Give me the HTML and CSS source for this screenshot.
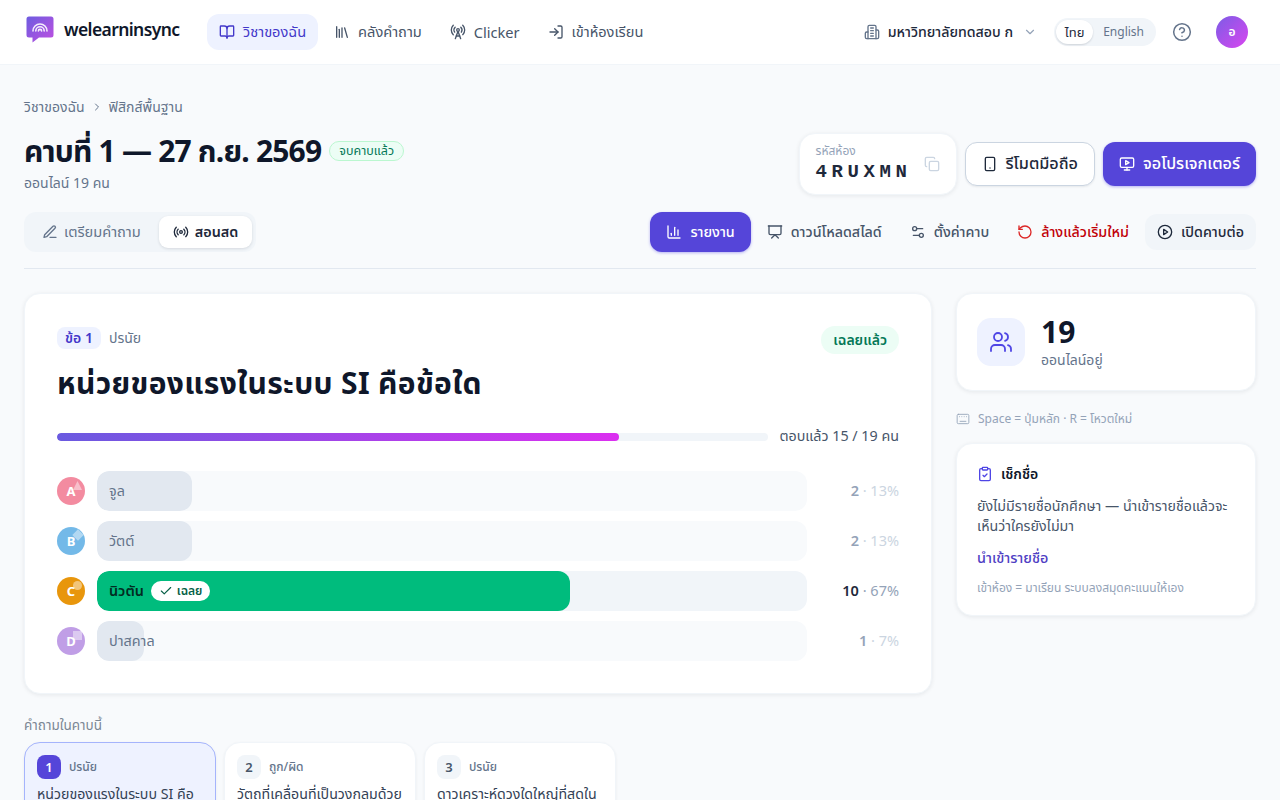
FILE: index.html
```html
<!DOCTYPE html>
<html lang="th">
<head>
  <meta charset="UTF-8" />
  <meta name="viewport" content="width=device-width, initial-scale=1.0" />
  <title>welearninsync</title>
  <link rel="stylesheet" href="styles.css">
</head>
<body>
  <!-- Top navigation -->
  <header class="topbar">
    <a class="brand">
      <svg class="brand-logo" width="30" height="30" viewBox="0 0 30 30">
        <defs><linearGradient id="logoGrad" x1="0" y1="0" x2="1" y2="1"><stop offset="0" stop-color="#6d5ce0"/><stop offset="1" stop-color="#c04fe0"/></linearGradient></defs>
        <path d="M4 1.500h22a2.500 2.500 0 0 1 2.500 2.500v16a2.500 2.500 0 0 1-2.500 2.500H14l-6.500 5v-5H4A2.500 2.500 0 0 1 1.500 20V4A2.500 2.500 0 0 1 4 1.500z" fill="url(#logoGrad)"/>
        <g fill="none" stroke="#fff" stroke-width="1.600" stroke-linecap="round" opacity=".9">
          <path d="M8 16a7 7 0 0 1 14 0"/><path d="M10.800 16a4.200 4.200 0 0 1 8.400 0"/><path d="M13.400 16a1.600 1.600 0 0 1 3.200 0"/>
        </g>
      </svg>
      <span>welearninsync</span>
    </a>
    <nav class="nav">
      <a class="nav-item active">
        <svg class="icon" viewBox="0 0 24 24"><path d="M12 7v14"/><path d="M3 18a1 1 0 0 1-1-1V4a1 1 0 0 1 1-1h5a4 4 0 0 1 4 4 4 4 0 0 1 4-4h5a1 1 0 0 1 1 1v13a1 1 0 0 1-1 1h-6a3 3 0 0 0-3 3 3 3 0 0 0-3-3z"/></svg>
        วิชาของฉัน
      </a>
      <a class="nav-item">
        <svg class="icon" viewBox="0 0 24 24"><path d="m16 6 4 14"/><path d="M12 6v14"/><path d="M8 8v12"/><path d="M4 4v16"/></svg>
        คลังคำถาม
      </a>
      <a class="nav-item">
        <svg class="icon" viewBox="0 0 24 24"><path d="M4.900 16.100C1 12.200 1 5.800 4.900 1.900"/><path d="M7.800 4.700a6.140 6.140 0 0 0-.8 7.500"/><circle cx="12" cy="9" r="2"/><path d="M16.200 4.800c2 2 2.260 5.110.8 7.470"/><path d="M19.100 1.900a9.960 9.960 0 0 1 0 14.100"/><path d="M9.500 18h5"/><path d="m8 22 4-11 4 11"/></svg>
        Clicker
      </a>
      <a class="nav-item">
        <svg class="icon" viewBox="0 0 24 24"><path d="M15 3h4a2 2 0 0 1 2 2v14a2 2 0 0 1-2 2h-4"/><path d="m10 17 5-5-5-5"/><path d="M15 12H3"/></svg>
        เข้าห้องเรียน
      </a>
    </nav>
    <div class="topbar-right">
      <button class="org-select">
        <svg class="icon" viewBox="0 0 24 24"><path d="M6 22V4a2 2 0 0 1 2-2h8a2 2 0 0 1 2 2v18z"/><path d="M6 12H4a2 2 0 0 0-2 2v6a2 2 0 0 0 2 2h2"/><path d="M18 9h2a2 2 0 0 1 2 2v9a2 2 0 0 1-2 2h-2"/><path d="M10 6h4"/><path d="M10 10h4"/><path d="M10 14h4"/><path d="M10 18h4"/></svg>
        <span>มหาวิทยาลัยทดสอบ ก</span>
        <svg class="icon chevron" viewBox="0 0 24 24"><path d="m6 9 6 6 6-6"/></svg>
      </button>
      <div class="lang-switch">
        <span class="lang on">ไทย</span>
        <span class="lang">English</span>
      </div>
      <svg class="icon help" viewBox="0 0 24 24"><circle cx="12" cy="12" r="10"/><path d="M9.090 9a3 3 0 0 1 5.830 1c0 2-3 3-3 3"/><path d="M12 17h.01"/></svg>
      <div class="avatar">อ</div>
    </div>
  </header>

  <main class="page">
    <div class="crumbs">
      <span>วิชาของฉัน</span>
      <svg class="icon" viewBox="0 0 24 24"><path d="m9 18 6-6-6-6"/></svg>
      <span>ฟิสิกส์พื้นฐาน</span>
    </div>

    <section class="session-head">
      <div>
        <div class="title-row">
          <h1>คาบที่ 1 — 27 ก.ย. 2569</h1>
          <span class="ended-pill">จบคาบแล้ว</span>
        </div>
        <p class="online-line">ออนไลน์ 19 คน</p>
      </div>
      <div class="head-actions">
        <div class="room-code">
          <div>
            <div class="room-label">รหัสห้อง</div>
            <div class="room-value">4RUXMN</div>
          </div>
          <svg class="icon copy" viewBox="0 0 24 24"><rect x="8" y="8" width="14" height="14" rx="2"/><path d="M4 16c-1.100 0-2-.9-2-2V4c0-1.100.9-2 2-2h10c1.100 0 2 .9 2 2"/></svg>
        </div>
        <button class="btn btn-outline">
          <svg class="icon" viewBox="0 0 24 24"><rect x="5" y="2" width="14" height="20" rx="2"/><path d="M12 18h.01"/></svg>
          รีโมตมือถือ
        </button>
        <button class="btn btn-primary">
          <svg class="icon" viewBox="0 0 24 24"><rect x="2" y="3" width="20" height="14" rx="2"/><path d="M8 21h8"/><path d="M12 17v4"/><path d="m10 7 5 3-5 3z"/></svg>
          จอโปรเจกเตอร์
        </button>
      </div>
    </section>

    <section class="toolbar">
      <div class="mode-tabs">
        <button class="mode-tab">
          <svg class="icon" viewBox="0 0 24 24"><path d="M12 20h9"/><path d="M16.500 3.500a2.120 2.120 0 0 1 3 3L7 19l-4 1 1-4z"/></svg>
          เตรียมคำถาม
        </button>
        <button class="mode-tab on">
          <svg class="icon" viewBox="0 0 24 24"><path d="M4.900 19.100C1 15.200 1 8.800 4.900 4.900"/><path d="M7.800 16.200c-2.300-2.300-2.300-6.100 0-8.500"/><circle cx="12" cy="12" r="2"/><path d="M16.200 7.800c2.300 2.300 2.300 6.100 0 8.500"/><path d="M19.100 4.900C23 8.800 23 15.100 19.100 19"/></svg>
          สอนสด
        </button>
      </div>
      <div class="tools">
        <button class="tool tool-primary">
          <svg class="icon" viewBox="0 0 24 24"><path d="M3 3v16a2 2 0 0 0 2 2h16"/><path d="M18 17V9"/><path d="M13 17V5"/><path d="M8 17v-3"/></svg>
          รายงาน
        </button>
        <button class="tool">
          <svg class="icon" viewBox="0 0 24 24"><path d="M2 3h20"/><path d="M21 3v11a2 2 0 0 1-2 2H5a2 2 0 0 1-2-2V3"/><path d="m7 21 5-5 5 5"/></svg>
          ดาวน์โหลดสไลด์
        </button>
        <button class="tool">
          <svg class="icon" viewBox="0 0 24 24"><path d="M14 17H5"/><path d="M19 7h-9"/><circle cx="17" cy="17" r="3"/><circle cx="7" cy="7" r="3"/></svg>
          ตั้งค่าคาบ
        </button>
        <button class="tool tool-danger">
          <svg class="icon" viewBox="0 0 24 24"><path d="M3 12a9 9 0 1 0 9-9 9.750 9.750 0 0 0-6.740 2.740L3 8"/><path d="M3 3v5h5"/></svg>
          ล้างแล้วเริ่มใหม่
        </button>
        <button class="tool tool-soft">
          <svg class="icon" viewBox="0 0 24 24"><circle cx="12" cy="12" r="10"/><path d="m10 8 6 4-6 4z"/></svg>
          เปิดคาบต่อ
        </button>
      </div>
    </section>

    <div class="content-grid">
      <section class="card question-card">
        <div class="q-top">
          <div class="q-tags">
            <span class="q-no">ข้อ 1</span>
            <span class="q-type">ปรนัย</span>
          </div>
          <span class="revealed-pill">เฉลยแล้ว</span>
        </div>
        <h2>หน่วยของแรงในระบบ SI คือข้อใด</h2>
        <div class="progress-row">
          <div class="progress"><div class="progress-fill" style="width: 79%"></div></div>
          <span class="progress-text">ตอบแล้ว 15 / 19 คน</span>
        </div>
        <ul class="answers">
          <li class="answer">
            <span class="letter letter-a">A<i class="mark mark-tri"></i></span>
            <div class="bar">
              <div class="bar-fill" style="width: 13.33%"></div>
              <span class="bar-label">จูล</span>
            </div>
            <span class="count"><b>2</b> · 13%</span>
          </li>
          <li class="answer">
            <span class="letter letter-b">B<i class="mark mark-dia"></i></span>
            <div class="bar">
              <div class="bar-fill" style="width: 13.33%"></div>
              <span class="bar-label">วัตต์</span>
            </div>
            <span class="count"><b>2</b> · 13%</span>
          </li>
          <li class="answer correct">
            <span class="letter letter-c">C<i class="mark mark-dot"></i></span>
            <div class="bar">
              <div class="bar-fill" style="width: 66.67%"></div>
              <span class="bar-label">นิวตัน
                <span class="key-pill">
                  <svg class="icon" viewBox="0 0 24 24"><path d="M20 6 9 17l-5-5"/></svg>
                  เฉลย
                </span>
              </span>
            </div>
            <span class="count"><b>10</b> · 67%</span>
          </li>
          <li class="answer">
            <span class="letter letter-d">D<i class="mark mark-sq"></i></span>
            <div class="bar">
              <div class="bar-fill" style="width: 6.67%"></div>
              <span class="bar-label">ปาสคาล</span>
            </div>
            <span class="count"><b>1</b> · 7%</span>
          </li>
        </ul>
      </section>

      <aside class="side">
        <div class="card online-card">
          <div class="online-icon">
            <svg class="icon" viewBox="0 0 24 24"><path d="M16 21v-2a4 4 0 0 0-4-4H6a4 4 0 0 0-4 4v2"/><circle cx="9" cy="7" r="4"/><path d="M22 21v-2a4 4 0 0 0-3-3.870"/><path d="M16 3.130a4 4 0 0 1 0 7.750"/></svg>
          </div>
          <div class="online-stat">
            <div class="online-num">19</div>
            <div class="online-label">ออนไลน์อยู่</div>
          </div>
        </div>
        <div class="shortcut-hint">
          <svg class="icon" viewBox="0 0 24 24"><rect x="2" y="4" width="20" height="16" rx="2"/><path d="M6 8h.01"/><path d="M10 8h.01"/><path d="M14 8h.01"/><path d="M18 8h.01"/><path d="M7 16h10"/></svg>
          Space = ปุ่มหลัก · R = โหวตใหม่
        </div>
        <div class="card roster-card">
          <div class="roster-title">
            <svg class="icon" viewBox="0 0 24 24"><rect x="8" y="2" width="8" height="4" rx="1"/><path d="M16 4h2a2 2 0 0 1 2 2v14a2 2 0 0 1-2 2H6a2 2 0 0 1-2-2V6a2 2 0 0 1 2-2h2"/><path d="m9 14 2 2 4-4"/></svg>
            เช็กชื่อ
          </div>
          <p class="roster-text">ยังไม่มีรายชื่อนักศึกษา — นำเข้ารายชื่อแล้วจะเห็นว่าใครยังไม่มา</p>
          <a class="roster-link">นำเข้ารายชื่อ</a>
          <p class="roster-note">เข้าห้อง = มาเรียน ระบบลงสมุดคะแนนให้เอง</p>
        </div>
      </aside>
    </div>

    <section class="q-list">
      <div class="q-list-label">คำถามในคาบนี้</div>
      <div class="q-list-row">
        <div class="q-item on">
          <div class="q-item-top"><span class="q-item-no">1</span><span>ปรนัย</span></div>
          <p>หน่วยของแรงในระบบ SI คือข้อใด</p>
        </div>
        <div class="q-item">
          <div class="q-item-top"><span class="q-item-no">2</span><span>ถูก/ผิด</span></div>
          <p>วัตถุที่เคลื่อนที่เป็นวงกลมด้วยอัตราเร็วคงที่</p>
        </div>
        <div class="q-item">
          <div class="q-item-top"><span class="q-item-no">3</span><span>ปรนัย</span></div>
          <p>ดาวเคราะห์ดวงใดใหญ่ที่สุดในระบบสุริยะ</p>
        </div>
      </div>
    </section>
  </main>
</body>
</html>
```

FILE: styles.css
```css
* {
  box-sizing: border-box;
}

html, body {
  margin: 0;
  height: 800px;
  overflow: hidden;
}

body {
  background: #f8fafc;
  color: #0f172a;
  font-family: 'Noto Sans', 'Noto Sans Thai', Roboto, sans-serif;
  font-size: 14.4px;
}

h1, h2, p, ul {
  margin: 0;
  padding: 0;
}

button {
  font: inherit;
  border: 0;
  background: none;
  color: inherit;
  padding: 0;
}

.icon {
  width: 16px;
  height: 16px;
  flex: none;
  fill: none;
  stroke: currentColor;
  stroke-width: 2;
  stroke-linecap: round;
  stroke-linejoin: round;
}

/* Top bar */
.topbar {
  height: 65px;
  background: #fff;
  border-bottom: 1px solid #f1f5f9;
  display: flex;
  align-items: center;
  padding: 0 32px 0 24px;
}

.brand {
  display: flex;
  align-items: center;
  gap: 9px;
  font-size: 17.5px;
  font-weight: 600;
  letter-spacing: -0.6px;
  width: 183px;
  margin-top: -6px;
}

.brand-logo {
  margin-left: 1px;
  margin-top: 2px;
}

.nav {
  display: flex;
  gap: 4px;
}

.nav-item {
  display: flex;
  align-items: center;
  gap: 8px;
  height: 36px;
  padding: 0 12px;
  border-radius: 12px;
  color: #475569;
  font-size: 14.6px;
}

.nav-item.active {
  background: #eef2ff;
  color: #4338ca;
}

.topbar-right {
  margin-left: auto;
  display: flex;
  align-items: center;
}

.org-select {
  display: flex;
  align-items: center;
  gap: 8px;
  font-size: 14.2px;
  font-weight: 500;
  color: #1e293b;
}

.org-select .icon {
  color: #64748b;
}

.org-select .chevron {
  width: 14px;
  height: 14px;
  color: #94a3b8;
  margin-left: 2px;
}

.lang-switch {
  display: flex;
  align-items: center;
  width: 102px;
  height: 28px;
  margin-left: 17px;
  padding: 2px;
  border-radius: 14px;
  background: #f1f5f9;
  font-size: 12px;
}

.lang {
  padding: 0 10px;
  line-height: 24px;
  color: #64748b;
  border-radius: 12px;
}

.lang.on {
  width: 38px;
  padding: 0;
  text-align: center;
  font-size: 13px;
  background: #fff;
  color: #1e293b;
  box-shadow: 0 1px 2px rgba(15, 23, 42, 0.15);
}

.help {
  width: 20px;
  height: 20px;
  margin-left: 16px;
  color: #64748b;
  stroke-width: 1.8;
}

.avatar {
  width: 32px;
  height: 32px;
  margin-left: 24px;
  border-radius: 50%;
  background: linear-gradient(135deg, #7c5ce6, #d946ef);
  color: #fff;
  font-size: 12px;
  font-weight: 600;
  display: flex;
  align-items: center;
  justify-content: center;
}

/* Page */
.page {
  padding: 32px 24px 0;
}

.crumbs {
  display: flex;
  align-items: center;
  gap: 6px;
  height: 20px;
  color: #64748b;
  font-size: 14px;
}

.crumbs .icon {
  width: 12px;
  height: 12px;
}

.session-head {
  display: flex;
  justify-content: space-between;
  align-items: flex-start;
  margin-top: 16px;
}

.title-row {
  display: flex;
  align-items: center;
  gap: 8px;
}

h1 {
  font-size: 30px;
  line-height: 36px;
  font-weight: 700;
  letter-spacing: -0.8px;
}

.ended-pill {
  border: 1px solid #bbf7d0;
  background: #ecfdf5;
  color: #047857;
  font-size: 12.5px;
  line-height: 18px;
  padding: 0 9px;
  border-radius: 10px;
}

.online-line {
  margin-top: 4px;
  color: #64748b;
  font-size: 14px;
  line-height: 20px;
}

.head-actions {
  display: flex;
  align-items: center;
  gap: 8px;
}

.room-code {
  width: 158px;
  height: 62px;
  padding: 0 16px;
  display: flex;
  align-items: center;
  justify-content: space-between;
  background: #fff;
  border: 1px solid #f1f5f9;
  border-radius: 16px;
  box-shadow: 0 1px 4px rgba(15, 23, 42, 0.08);
}

.room-label {
  font-size: 12px;
  line-height: 13px;
  color: #94a3b8;
}

.room-value {
  margin-top: 3px;
  font-family: 'Liberation Mono', monospace;
  font-size: 19px;
  line-height: 24px;
  font-weight: 700;
  letter-spacing: 4.600px;
  color: #1e293b;
}

.copy {
  color: #cbd5e1;
}

.btn {
  display: flex;
  align-items: center;
  gap: 8px;
  height: 44px;
  padding: 0 16px;
  border-radius: 12px;
  font-size: 16.2px;
  font-weight: 500;
}

.btn-outline {
  background: #fff;
  border: 1px solid #cbd5e1;
  color: #1e293b;
  box-shadow: 0 1px 2px rgba(15, 23, 42, 0.08);
}

.btn-primary {
  background: #5545d9;
  color: #fff;
  box-shadow: 0 1px 3px rgba(79, 70, 229, 0.4);
}

/* Toolbar */
.toolbar {
  display: flex;
  justify-content: space-between;
  align-items: center;
  margin-top: 17px;
  padding-bottom: 16px;
  border-bottom: 1px solid #e2e8f0;
}

.mode-tabs {
  display: flex;
  gap: 4px;
  height: 40px;
  padding: 4px;
  background: #f1f5f9;
  border-radius: 12px;
  font-size: 14.6px;
}

.mode-tab {
  display: flex;
  align-items: center;
  gap: 6px;
  padding: 0 14px;
  border-radius: 9px;
  color: #64748b;
}

.mode-tab.on {
  background: #fff;
  color: #1e293b;
  font-weight: 600;
  font-size: 14.4px;
  box-shadow: 0 1px 3px rgba(15, 23, 42, 0.12);
}

.tools {
  display: flex;
  align-items: center;
  gap: 4px;
  font-size: 14.3px;
}

.tool {
  display: flex;
  align-items: center;
  gap: 8px;
  height: 36px;
  padding: 0 12px;
  border-radius: 12px;
  color: #475569;
  font-weight: 500;
}

.tool-primary {
  height: 40px;
  padding: 0 16px;
  background: #5545d9;
  color: #fff;
  box-shadow: 0 1px 3px rgba(79, 70, 229, 0.4);
}

.tool-danger {
  color: #c10007;
}

.tool-danger .icon {
  color: #dc2626;
}

.tool-soft {
  background: #f1f5f9;
  color: #1e293b;
}

/* Main grid */
.content-grid {
  display: grid;
  grid-template-columns: 908px 300px;
  gap: 24px;
  margin-top: 24px;
  align-items: start;
}

.card {
  background: #fff;
  border: 1px solid #f1f5f9;
  border-radius: 16px;
  box-shadow: 0 1px 4px rgba(15, 23, 42, 0.08);
}

.question-card {
  height: 401px;
  padding: 32px;
}

.q-top {
  display: flex;
  justify-content: space-between;
  align-items: flex-start;
}

.q-tags {
  display: flex;
  align-items: center;
  gap: 8px;
  margin-top: 1px;
}

.q-no {
  padding: 0 8px;
  line-height: 22px;
  border-radius: 8px;
  background: #eef2ff;
  color: #4338ca;
  font-size: 14px;
  font-weight: 600;
}

.q-type {
  color: #64748b;
  font-size: 14px;
}

.revealed-pill {
  padding: 0 12px;
  line-height: 28px;
  border-radius: 14px;
  background: #ecfdf5;
  color: #047857;
  font-size: 14px;
  font-weight: 600;
}

h2 {
  margin-top: 8px;
  font-size: 30px;
  line-height: 42px;
  font-weight: 700;
  letter-spacing: 0.35px;
}

.progress-row {
  display: flex;
  align-items: center;
  gap: 11px;
  margin-top: 22px;
}

.progress {
  flex: 1;
  height: 8px;
  border-radius: 4px;
  background: #f1f5f9;
  overflow: hidden;
}

.progress-fill {
  height: 100%;
  border-radius: 4px;
  background: linear-gradient(90deg, #6a5ae0, #db2ff0);
}

.progress-text {
  color: #475569;
  font-size: 14.3px;
}

.answers {
  list-style: none;
  display: flex;
  flex-direction: column;
  gap: 10px;
  margin-top: 24px;
}

.answer {
  display: flex;
  align-items: center;
  gap: 12px;
}

.letter {
  position: relative;
  width: 28px;
  height: 28px;
  flex: none;
  border-radius: 50%;
  color: #fff;
  font-size: 13px;
  font-weight: 700;
  display: flex;
  align-items: center;
  justify-content: center;
}

.letter-a { background: #f38ba0; }
.letter-b { background: #73b9e8; }
.letter-c { background: #e8960c; }
.letter-d { background: #c09ee6; }

.mark {
  position: absolute;
  top: 4px;
  right: 3px;
  width: 9px;
  height: 9px;
  background: rgba(255, 255, 255, 0.45);
}

.mark-tri { clip-path: polygon(50% 0, 100% 100%, 0 100%); }
.mark-dia { transform: rotate(45deg); width: 8px; height: 8px; }
.mark-dot { border-radius: 50%; }

.bar {
  position: relative;
  flex: none;
  width: 710px;
  height: 40px;
  border-radius: 12px;
  background: #f8fafc;
  overflow: hidden;
}

.correct .bar {
  background: #f1f5f9;
}

.bar-fill {
  height: 100%;
  border-radius: 12px;
  background: #e2e8f0;
}

.correct .bar-fill {
  background: #00bc7d;
}

.bar-label {
  position: absolute;
  left: 12px;
  top: 0;
  height: 40px;
  display: flex;
  align-items: center;
  gap: 7px;
  color: #64748b;
}

.correct .bar-label {
  color: #022c22;
  font-weight: 600;
}

.key-pill {
  display: flex;
  align-items: center;
  gap: 4px;
  height: 20px;
  padding: 0 8px;
  border-radius: 10px;
  background: #fff;
  color: #065f46;
  font-size: 12px;
}

.key-pill .icon {
  width: 14px;
  height: 14px;
}

.count {
  flex: 1;
  text-align: right;
  color: #cbd5e1;
  font-size: 14.5px;
  padding-bottom: 2px;
}

.count b {
  color: #94a3b8;
  font-weight: 600;
}

.correct .count {
  color: #94a3b8;
}

.correct .count b {
  color: #1e293b;
}

/* Right column */
.side {
  display: flex;
  flex-direction: column;
}

.online-card {
  height: 98px;
  display: flex;
  align-items: center;
  gap: 16px;
  padding: 0 20px;
}

.online-icon {
  width: 48px;
  height: 48px;
  border-radius: 14px;
  background: #eef2ff;
  color: #4f46e5;
  display: flex;
  align-items: center;
  justify-content: center;
}

.online-icon .icon {
  width: 24px;
  height: 24px;
  stroke-width: 1.800;
}

.online-stat {
  padding-top: 2px;
}

.online-num {
  font-size: 30px;
  line-height: 32px;
  font-weight: 700;
}

.online-label {
  margin-top: 1px;
  color: #64748b;
  font-size: 14px;
  line-height: 22px;
}

.shortcut-hint {
  display: flex;
  align-items: center;
  gap: 8px;
  height: 16px;
  margin: 20px 0 16px;
  color: #94a3b8;
  font-size: 12px;
}

.shortcut-hint .icon {
  width: 14px;
  height: 14px;
  stroke-width: 1.500;
}

.roster-card {
  height: 173px;
  padding: 20px;
}

.roster-title {
  display: flex;
  align-items: center;
  gap: 8px;
  font-weight: 600;
  font-size: 14px;
  line-height: 20px;
}

.roster-title .icon {
  color: #4f46e5;
}

.roster-text {
  margin-top: 12px;
  color: #475569;
  font-size: 14.2px;
  line-height: 20px;
}

.roster-link {
  display: block;
  margin-top: 12px;
  color: #4f3fc4;
  font-weight: 500;
  line-height: 20px;
}

.roster-note {
  margin-top: 12px;
  color: #94a3b8;
  font-size: 12px;
  line-height: 16px;
}

/* Question strip */
.q-list {
  margin-top: 23px;
}

.q-list-label {
  color: #7b8794;
  font-size: 13.5px;
  line-height: 16px;
}

.q-list-row {
  display: flex;
  gap: 8px;
  margin-top: 9px;
}

.q-item {
  width: 192px;
  height: 96px;
  padding: 12px;
  background: #fff;
  border: 1px solid #f1f5f9;
  border-radius: 16px;
  box-shadow: 0 1px 3px rgba(15, 23, 42, 0.06);
}

.q-item.on {
  background: #eef2ff;
  border-color: #a5b4fc;
}

.q-item-top {
  display: flex;
  align-items: center;
  gap: 8px;
  color: #64748b;
  font-size: 12px;
  font-weight: 500;
}

.q-item-no {
  width: 24px;
  height: 24px;
  border-radius: 8px;
  background: #f1f5f9;
  color: #475569;
  display: flex;
  align-items: center;
  justify-content: center;
  font-size: 13px;
  font-weight: 600;
}

.q-item.on .q-item-no {
  background: #5545d9;
  color: #fff;
}

.q-item p {
  margin-top: 5px;
  color: #334155;
  font-size: 14.2px;
  line-height: 20px;
}
```
